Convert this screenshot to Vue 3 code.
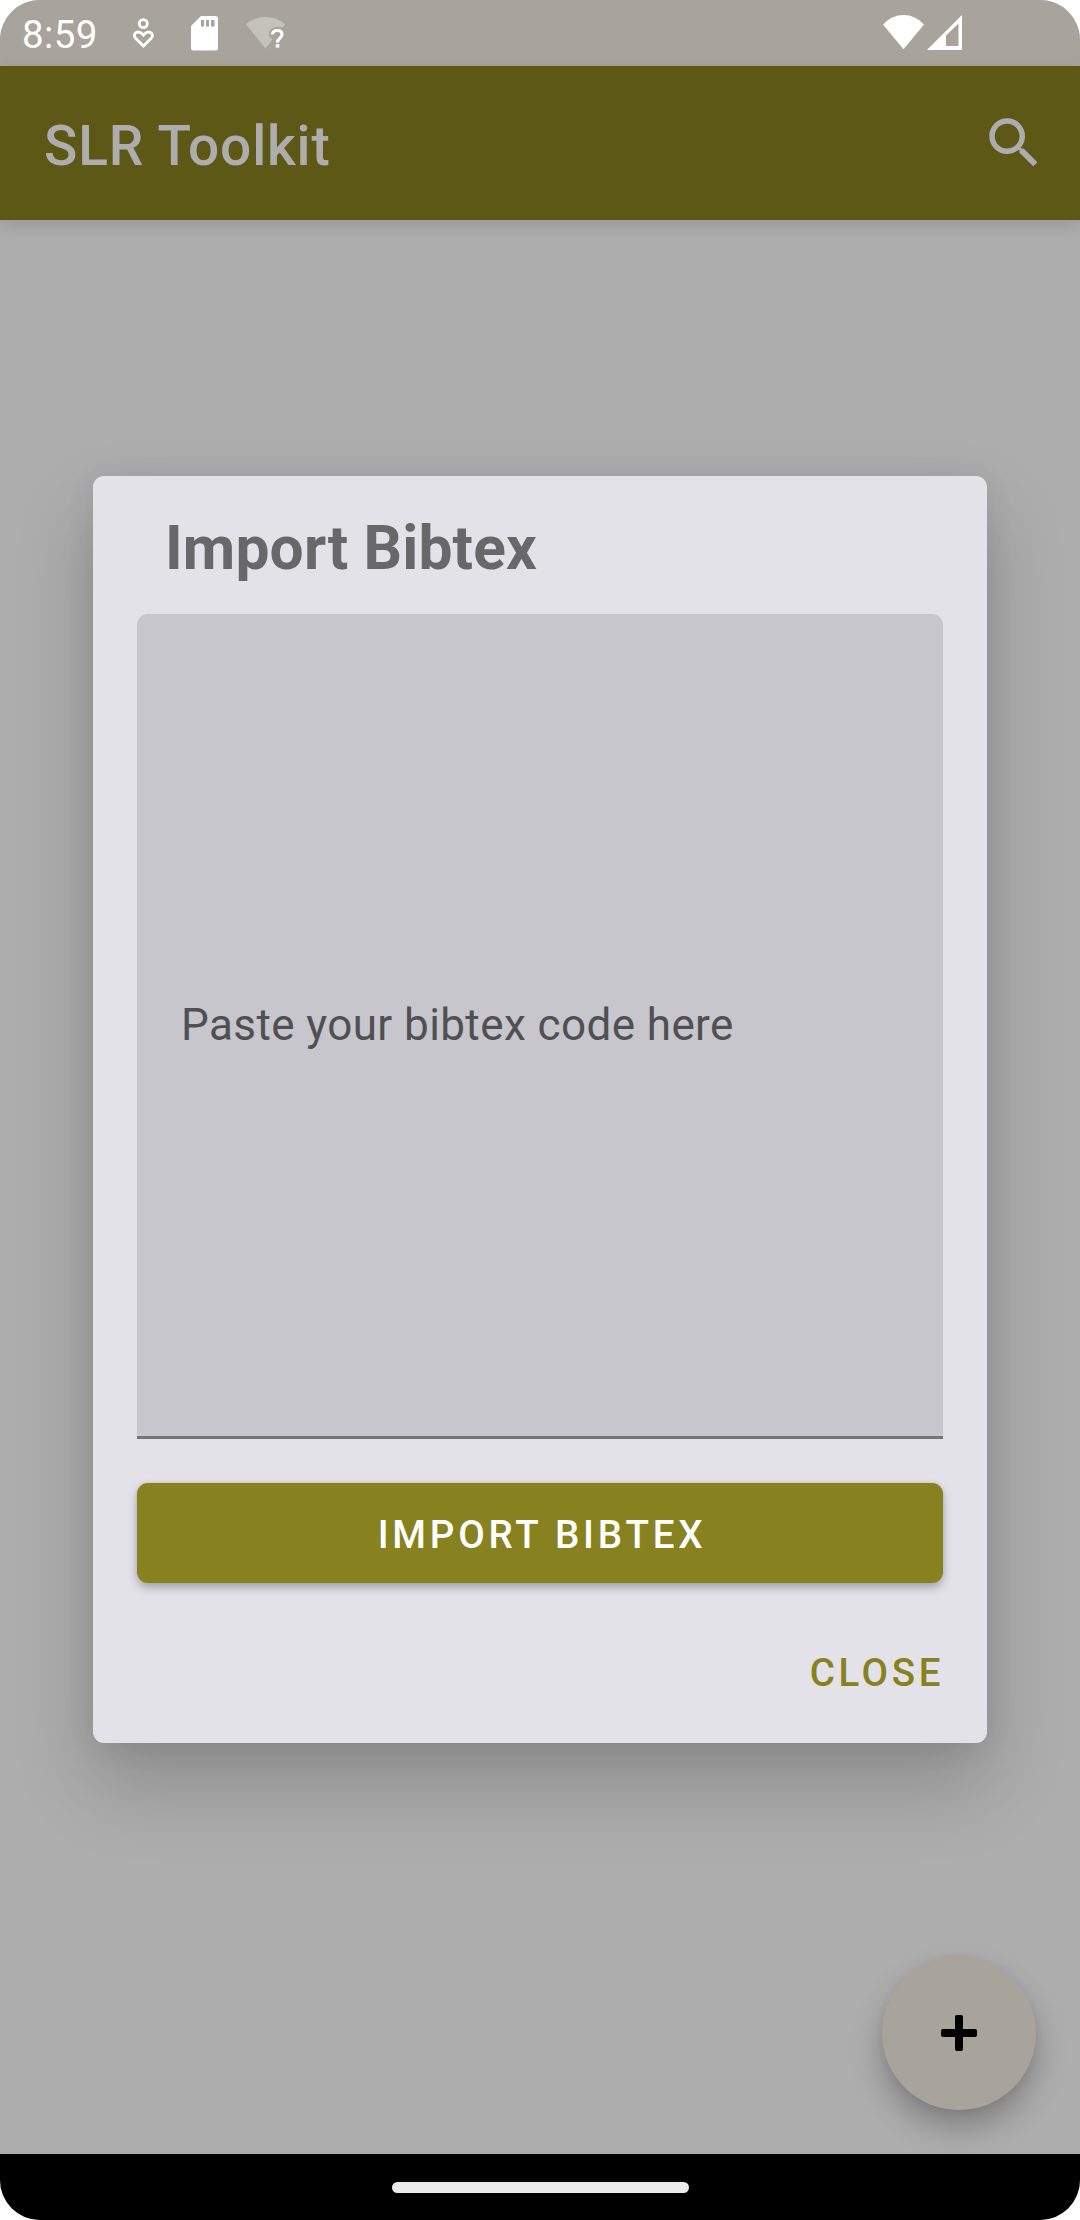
<script setup>
const time = '8:59'
const appTitle = 'SLR Toolkit'
const dialogTitle = 'Import Bibtex'
const placeholder = 'Paste your bibtex code here'
</script>

<template>
  <div class="screen">
    <header class="status">
      <span class="clock">{{ time }}</span>
      <svg class="notifications" width="160" height="40" viewBox="130 13 160 40">
        <circle cx="143.3" cy="23.6" r="4" fill="none" stroke="#fff" stroke-width="2.8" />
        <path d="M143.4 46 L135.6 38.200 C131.500 34 138 28.800 143.400 35 C148.800 28.800 155.300 34 151.200 38.200 Z" fill="none" stroke="#fff" stroke-width="2.8" />
        <path fill="#fff" fill-rule="evenodd" d="M201 16 H215.5 A2.5 2.5 0 0 1 218 18.5 V48 A2.5 2.5 0 0 1 215.5 50.5 H193.5 A2.5 2.5 0 0 1 191 48 V26 Z M201 20 V26.5 H204 V20 Z M206 20 V26.5 H209 V20 Z M211 20 V26.5 H214.5 V20 Z" />
        <path fill="#c5c1bb" d="M246 24.2 Q254 17 265.5 17 Q277 17 285 24.2 L282.500 27.5 Q276 25.500 271 29 Q268.500 32 269 36 L272.500 39.500 L265.5 48.5 Z" />
        <path d="M272.5 34.500 Q272.500 30.500 277.500 30.500 Q282 30.500 282 34.500 Q282 36.500 279.500 38.500 Q277.500 40 277.500 42.500" fill="none" stroke="#fff" stroke-width="3.2" />
        <rect x="275.800" y="44.2" width="3.500" height="3.400" fill="#fff" />
      </svg>
      <svg class="signals" width="82" height="38" viewBox="882 14 82 38">
        <path fill="#fff" d="M883 24.5 Q891.5 15 903.5 15 Q915.5 15 924 24.5 L903.5 49.3 Z" />
        <path fill="#fff" fill-rule="evenodd" d="M927 50 L962 15 V50 Z M946 35.5 V46 H958.5 V23.5 Z" />
      </svg>
    </header>
    <div class="toolbar">
      <h1>{{ appTitle }}</h1>
      <svg width="66" height="66" viewBox="0 0 24 24" fill="#adadad">
        <path d="M15.5 14h-.79l-.28-.27A6.471 6.471 0 0 0 16 9.5 6.5 6.5 0 1 0 9.5 16c1.61 0 3.09-.59 4.23-1.57l.27.28v.79l5 4.99L20.49 19l-4.99-5zm-6 0C7.01 14 5 11.99 5 9.5S7.01 5 9.5 5 14 7.01 14 9.5 11.99 14 9.5 14z" />
      </svg>
    </div>
    <main class="content">
      <button class="fab" aria-label="Add">
        <svg width="36" height="36" viewBox="0 0 36 36">
          <rect x="14" width="8" height="36" rx="2" />
          <rect y="14" width="36" height="8" rx="2" />
        </svg>
      </button>
      <section class="dialog" role="dialog">
        <h2>{{ dialogTitle }}</h2>
        <div class="field">{{ placeholder }}</div>
        <button class="import">IMPORT BIBTEX</button>
        <button class="close">CLOSE</button>
      </section>
    </main>
    <footer class="nav"><div class="pill"></div></footer>
  </div>
</template>

<style>
body {
  margin: 0;
  background: #fff;
}
</style>

<style scoped>
.screen {
  width: 1080px;
  height: 2220px;
  display: flex;
  flex-direction: column;
  overflow: hidden;
  border-radius: 40px;
  background: #adadad;
  font-family: Roboto, sans-serif;
}
h1, h2 { margin: 0; }
button {
  border: 0;
  padding: 0;
  font-family: inherit;
}
svg { display: block; }
.status {
  height: 66px;
  flex: none;
  box-sizing: border-box;
  padding: 0 116px 0 22px;
  display: flex;
  align-items: center;
  background: #a8a49b;
  color: #fff;
}
.clock {
  width: 108px;
  padding-top: 3px;
  font-size: 38.5px;
  line-height: 46px;
  letter-spacing: 0.35px;
}
.signals { margin-left: auto; }
.toolbar {
  height: 154px;
  flex: none;
  box-sizing: border-box;
  padding: 0 33px 0 44px;
  display: flex;
  justify-content: space-between;
  align-items: center;
  background: #5d5816;
  box-shadow: 0 5px 16px rgba(0, 0, 0, 0.13);
  z-index: 1;
}
.toolbar h1 {
  padding-top: 6px;
  color: #adadad;
  font-size: 55px;
  line-height: 64px;
  font-weight: 500;
  letter-spacing: 0.85px;
}
.content {
  position: relative;
  flex: 1;
  overflow: hidden;
}
.fab {
  position: absolute;
  right: 44px;
  bottom: 44px;
  width: 154px;
  height: 154px;
  border-radius: 50%;
  display: flex;
  align-items: center;
  justify-content: center;
  background: #a8a49b;
  box-shadow: 0 18px 30px rgba(0, 0, 0, 0.25), 0 2px 8px rgba(0, 0, 0, 0.06);
}
.dialog {
  position: absolute;
  left: 93px;
  top: 256px;
  width: 894px;
  height: 1267px;
  box-sizing: border-box;
  padding: 37px 44px 0;
  display: flex;
  flex-direction: column;
  border-radius: 11px;
  background: #e3e2e8;
  box-shadow: 0 40px 80px rgba(0, 0, 0, 0.2), 0 4px 30px rgba(0, 0, 0, 0.07);
}
.dialog h2 {
  height: 101px;
  flex: none;
  padding-left: 28px;
  color: #68686a;
  font-size: 60.5px;
  line-height: 72px;
  font-weight: 700;
  letter-spacing: 0.15px;
  box-sizing: border-box;
}
.field {
  height: 825px;
  flex: none;
  box-sizing: border-box;
  padding-left: 44px;
  display: flex;
  align-items: center;
  background: #c7c6cc;
  border-bottom: 3px solid #747477;
  border-radius: 11px 11px 0 0;
  color: #505052;
  font-size: 44px;
  letter-spacing: 0.009375em;
}
.import, .close {
  font-size: 38.5px;
  font-weight: 500;
}
.import {
  height: 100px;
  flex: none;
  margin-top: 44px;
  padding: 3px 0 0 4px;
  border-radius: 11px;
  background: #888120;
  color: #fff;
  letter-spacing: 3.8px;
  box-shadow: 0 5px 10px rgba(0, 0, 0, 0.25), 0 0 4px rgba(0, 0, 0, 0.1);
}
.close {
  align-self: flex-end;
  margin: 67px -1px 0 0;
  line-height: 46px;
  background: none;
  color: #888120;
  letter-spacing: 3.6px;
}
.nav {
  height: 66px;
  flex: none;
  display: flex;
  align-items: center;
  justify-content: center;
  background: #000;
}
.pill {
  width: 297px;
  height: 11px;
  border-radius: 6px;
  background: #ebebeb;
}
</style>
